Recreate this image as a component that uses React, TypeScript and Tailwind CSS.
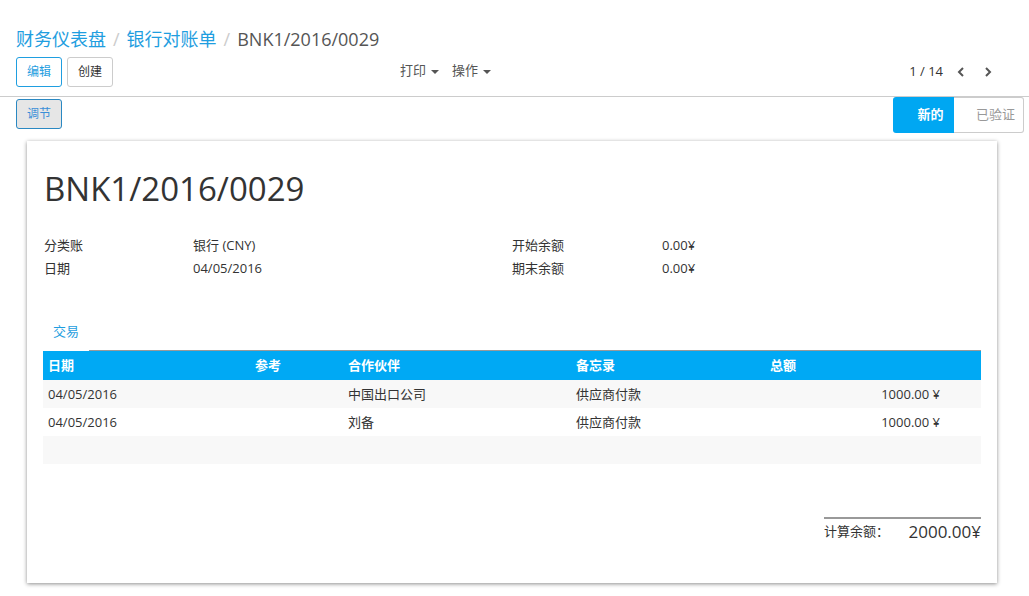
import React from "react";

const font = { fontFamily: '"Open Sans", "Noto Sans CJK SC", sans-serif' };

function Caret() {
  return <span className="inline-block ml-[5px] align-middle w-0 h-0 border-l-[4px] border-r-[4px] border-t-[4px] border-l-transparent border-r-transparent border-t-[#555]" />;
}

export default function App() {
  const rows = [
    { date: "04/05/2016", partner: "中国出口公司", memo: "供应商付款", amt: "1000.00 ¥", bg: "bg-[#f8f8f8]" },
    { date: "04/05/2016", partner: "刘备", memo: "供应商付款", amt: "1000.00 ¥", bg: "bg-white" },
  ];
  return (
    <div className="w-[1029px] h-[596px] bg-white overflow-hidden text-[#333]" style={font}>
      {/* control panel */}
      <div className="border-b border-[#ccc] pl-4 pr-[36px] pt-[27px] pb-[9px]">
        <div className="flex items-center h-[24px] text-[18px] leading-[24px]">
          <span className="text-[#1f9ee0]">财务仪表盘</span>
          <span className="text-[#ccc] mx-[7px]">/</span>
          <span className="text-[#1f9ee0]">银行对账单</span>
          <span className="text-[#ccc] mx-[7px]">/</span>
          <span className="text-[#555]">BNK1/2016/0029</span>
        </div>
        <div className="flex items-center mt-[5px] h-[31px] relative">
          <button className="h-[30px] w-[46px] border border-[#1f9ee0] rounded-[3px] text-[12px] text-[#1f9ee0] bg-white">编辑</button>
          <button className="h-[30px] w-[46px] ml-[5px] border border-[#ccc] rounded-[3px] text-[12px] text-[#333] bg-white">创建</button>
          <div className="absolute left-[384px] top-0 h-[30px] flex items-center text-[13px] text-[#555]">
            <span>打印<Caret /></span>
            <span className="ml-[13px]">操作<Caret /></span>
          </div>
          <div className="ml-auto flex items-center text-[13px] text-[#333]">
            <span>1 / 14</span>
            <svg className="ml-[13px]" width="10" height="12" viewBox="0 0 10 12"><path d="M7 2 L3 6 L7 10" stroke="#555" strokeWidth="2" fill="none" /></svg>
            <svg className="ml-[17px]" width="10" height="12" viewBox="0 0 10 12"><path d="M3 2 L7 6 L3 10" stroke="#555" strokeWidth="2" fill="none" /></svg>
          </div>
        </div>
      </div>
      {/* status bar */}
      <div className="flex items-start pl-4 pr-[5px] h-[37px]">
        <button className="mt-[2px] h-[30px] w-[46px] border border-[#2a88c2] rounded-[3px] text-[12px] text-[#3a8fd8] bg-[#e6e6e6]">调节</button>
        <div className="ml-auto flex h-[36px]">
          <div className="w-[61px] h-full bg-[#00a7f2] rounded-l-[3px] text-white text-[13px] font-semibold flex items-center justify-center pl-[14px]">新的</div>
          <div className="w-[70px] h-full bg-white border border-[#ccc] border-l-0 rounded-r-[3px] text-[#999] text-[13px] flex items-center justify-center pl-[14px]">已验证</div>
        </div>
      </div>
      {/* sheet */}
      <div className="mt-[7px] ml-[27px] w-[970px] h-[442px] bg-white shadow-[0_1px_4px_rgba(0,0,0,0.45)] px-4 pt-[26px]">
        <div className="pl-[1px] text-[33px] leading-[44px] text-[#333]">BNK1/2016/0029</div>
        <div className="mt-[23px] flex text-[13px] leading-[23px]">
          <div className="w-[469px] flex pl-[1px]">
            <div className="w-[149px]">
              <div>分类账</div>
              <div>日期</div>
            </div>
            <div>
              <div>银行 (CNY)</div>
              <div>04/05/2016</div>
            </div>
          </div>
          <div className="flex">
            <div className="w-[150px]">
              <div>开始余额</div>
              <div>期末余额</div>
            </div>
            <div>
              <div>0.00¥</div>
              <div>0.00¥</div>
            </div>
          </div>
        </div>
        {/* tabs */}
        <div className="mt-[34px] flex border-b border-[#999] h-[37px]">
          <div className="w-[46px] h-[37px] bg-white -mb-px flex items-center justify-center text-[13px] text-[#1f9ee0] pb-[1px]">交易</div>
        </div>
        <div className="text-[13px]">
          <div className="flex h-[29px] items-center bg-[#00a9f4] text-white font-semibold">
            <div className="w-[212px] pl-[5px]">日期</div>
            <div className="w-[93px]">参考</div>
            <div className="w-[228px]">合作伙伴</div>
            <div className="w-[194px]">备忘录</div>
            <div className="w-[100px]">总额</div>
          </div>
          {rows.map((r, i) => (
            <div key={i} className={`flex h-[28px] items-center pt-[2px] ${r.bg}`}>
              <div className="w-[212px] pl-[5px]">{r.date}</div>
              <div className="w-[93px]"></div>
              <div className="w-[228px]">{r.partner}</div>
              <div className="w-[194px]">{r.memo}</div>
              <div className="w-[170px] text-right">{r.amt}</div>
            </div>
          ))}
          <div className="h-[28px] bg-[#f8f8f8]" />
        </div>
        <div className="flex justify-end mt-[53px]">
          <div className="w-[157px] border-t-2 border-[#999] flex items-center justify-between h-[24px] pt-[4px]">
            <span className="text-[13px]">计算余额：</span>
            <span className="text-[17px]">2000.00¥</span>
          </div>
        </div>
      </div>
    </div>
  );
}
